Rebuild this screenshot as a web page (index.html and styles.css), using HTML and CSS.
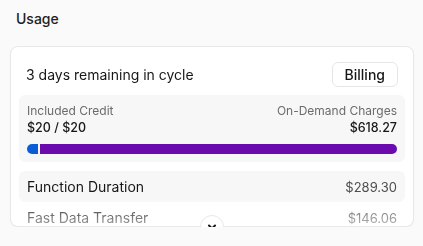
FILE: index.html
```html
<!DOCTYPE html>
<html lang="en">
<head>
    <meta charset="UTF-8">
    <meta name="viewport" content="width=device-width, initial-scale=1.0">
    <title>Usage</title>
    <link rel="stylesheet" href="styles.css">
</head>
<body>
    <div class="page">
        <h1 class="title">Usage</h1>

        <div class="card">
            <div class="card-body">
                <div class="card-header">
                    <span class="cycle">3 days remaining in cycle</span>
                    <button class="billing">Billing</button>
                </div>

                <div class="credit">
                    <div class="credit-row">
                        <span class="label">Included Credit</span>
                        <span class="label">On-Demand Charges</span>
                    </div>
                    <div class="credit-row">
                        <span class="amount">$20 / $20</span>
                        <span class="amount">$618.27</span>
                    </div>
                    <div class="bar">
                        <div class="bar-credit"></div>
                        <div class="bar-demand"></div>
                    </div>
                </div>

                <div class="items">
                    <div class="item">
                        <span class="item-name">Function Duration</span>
                        <span class="item-cost">$289.30</span>
                    </div>
                    <div class="item">
                        <span class="item-name">Fast Data Transfer</span>
                        <span class="item-cost">$146.06</span>
                    </div>
                </div>
            </div>

            <button class="expand" aria-label="Show more">
                <svg width="10" height="10" viewBox="0 0 10 10" fill="none">
                    <path d="M2 3.5l3 3 3-3" stroke="#171717" stroke-width="2" stroke-linecap="round" stroke-linejoin="round"/>
                </svg>
            </button>
        </div>
    </div>
</body>
</html>
```

FILE: styles.css
```css
body {
    margin: 0;
    background: #fafafa;
    font-family: Inter, "Liberation Sans", sans-serif;
    color: #171717;
}

.page {
    padding: 9px 9px 0 10px;
}

.title {
    margin: 0 0 17px 6px;
    font-size: 14px;
    line-height: 20px;
    font-weight: 500;
    color: #222;
}

.card {
    position: relative;
    background: #fff;
    border: 1px solid #e8e8e8;
    border-radius: 8px;
    box-shadow: 0 1px 2px rgba(0, 0, 0, 0.04);
}

.card-body {
    height: 179px;
    overflow: hidden;
    -webkit-mask-image: linear-gradient(to bottom, #000 150px, rgba(0, 0, 0, 0.4) 179px);
    mask-image: linear-gradient(to bottom, #000 150px, rgba(0, 0, 0, 0.4) 179px);
}

.card-header {
    display: flex;
    justify-content: space-between;
    align-items: center;
    padding: 15px 15px 8px 15px;
}

.cycle {
    font-size: 14px;
}

.billing {
    height: 25px;
    padding: 0 12px;
    background: #fff;
    border: 1px solid #e6e6e6;
    border-radius: 6px;
    font-family: inherit;
    font-size: 14px;
    font-weight: 500;
    color: #171717;
}

.credit {
    margin: 0 8px;
    padding: 7px 8px 8px 8px;
    background: #f7f7f7;
    border-radius: 6px;
}

.credit-row {
    display: flex;
    justify-content: space-between;
}

.label {
    font-size: 12px;
    line-height: 17px;
    color: #6b6b6b;
}

.amount {
    font-size: 12.5px;
    line-height: 17px;
    font-weight: 500;
}

.bar {
    display: flex;
    gap: 2px;
    height: 10px;
    margin-top: 8px;
}

.bar-credit {
    width: 11px;
    background: #0b5dd6;
    border-radius: 5px 0 0 5px;
}

.bar-demand {
    flex: 1;
    background: #6b0aad;
    border-radius: 0 5px 5px 0;
}

.items {
    margin: 9px 8px 0 8px;
}

.item {
    display: flex;
    justify-content: space-between;
    align-items: center;
    height: 31px;
    padding: 0 8px;
    border-radius: 6px;
}

.item:nth-child(odd) {
    background: #f7f7f7;
}

.item-name {
    font-size: 14px;
}

.item-cost {
    font-size: 13px;
    color: #4d4d4d;
}

.expand {
    position: absolute;
    left: 50%;
    bottom: -13px;
    transform: translateX(-50%);
    width: 24px;
    height: 24px;
    padding: 0;
    display: flex;
    align-items: center;
    justify-content: center;
    background: #fff;
    border: 1px solid #e8e8e8;
    border-radius: 50%;
}
```
